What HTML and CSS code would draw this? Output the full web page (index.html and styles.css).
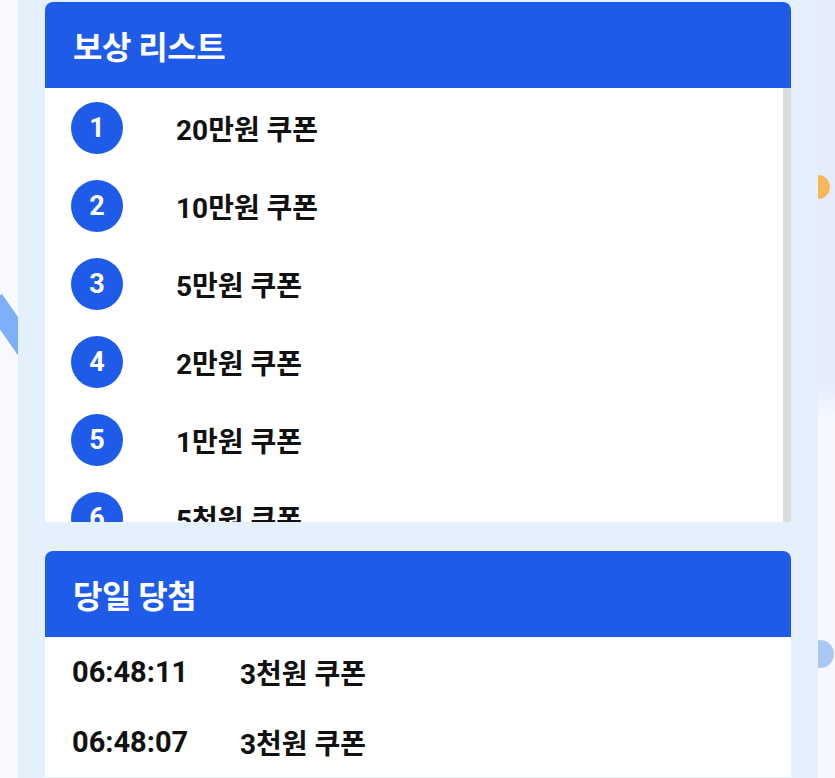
FILE: index.html
```html
<!DOCTYPE html>
<html lang="ko">
<head>
<meta charset="utf-8">
<link rel="stylesheet" href="styles.css">
</head>
<body>
<div class="page">
  <div class="side side-left">
    <div class="stripe"></div>
  </div>
  <main class="panel">
    <section class="card">
      <header class="card-head">보상 리스트</header>
      <div class="reward-list">
        <div class="reward"><span class="rank">1</span><span class="label">20만원 쿠폰</span></div>
        <div class="reward"><span class="rank">2</span><span class="label">10만원 쿠폰</span></div>
        <div class="reward"><span class="rank">3</span><span class="label">5만원 쿠폰</span></div>
        <div class="reward"><span class="rank">4</span><span class="label">2만원 쿠폰</span></div>
        <div class="reward"><span class="rank">5</span><span class="label">1만원 쿠폰</span></div>
        <div class="reward"><span class="rank">6</span><span class="label">5천원 쿠폰</span></div>
      </div>
    </section>
    <section class="card card-second">
      <header class="card-head">당일 당첨</header>
      <div class="win-list">
        <div class="win"><span class="time">06:48:11</span><span class="label">3천원 쿠폰</span></div>
        <div class="win"><span class="time">06:48:07</span><span class="label">3천원 쿠폰</span></div>
      </div>
    </section>
  </main>
  <div class="side side-right">
    <div class="dot dot-orange"></div>
    <div class="dot dot-blue"></div>
  </div>
</div>
</body>
</html>
```
FILE: styles.css
```css
* { box-sizing: border-box; }
html, body { margin: 0; padding: 0; }
body {
  background: #f5f7fd;
  font-family: Roboto, "Noto Sans CJK KR", "Noto Sans", sans-serif;
  width: 835px;
  height: 778px;
  overflow: hidden;
}
.page {
  display: flex;
  height: 778px;
}
.side {
  position: relative;
  width: 18px;
  flex: none;
  background: #f7f9fe;
}
.side-right {
  width: 17px;
  background: linear-gradient(180deg, #e6ecfb 0, #e6ecfb 380px, #f6f8fe 420px, #f6f8fe 100%);
}
.stripe {
  position: absolute;
  left: -22px;
  top: 318px;
  width: 70px;
  height: 22px;
  background: #7cb0fb;
  transform: rotate(55deg);
}
.dot {
  position: absolute;
  left: -12px;
  border-radius: 50%;
}
.dot-orange {
  top: 175px;
  width: 24px;
  height: 24px;
  background: #f8b75a;
}
.dot-blue {
  top: 640px;
  width: 28px;
  height: 28px;
  background: #a9c9f5;
}
.panel {
  width: 800px;
  flex: none;
  background: #e4f0fc;
  padding: 2px 27px 0;
  position: relative;
  z-index: 1;
}
.card {
  background: #ffffff;
  border-radius: 8px 8px 0 0;
  overflow: hidden;
}
.card-second { margin-top: 29px; }
.card-head {
  height: 86px;
  background: #1f5be9;
  color: #ffffff;
  font-weight: 700;
  font-size: 32px;
  display: flex;
  align-items: center;
  padding-left: 28px;
  letter-spacing: -0.5px;
}
.reward-list {
  height: 434px;
  overflow: hidden;
  border-right: 8px solid #dcdcdc;
  padding-top: 1px;
}
.reward {
  height: 78px;
  display: flex;
  align-items: center;
  padding-left: 26px;
}
.rank {
  width: 52px;
  height: 52px;
  border-radius: 50%;
  background: #1f5be9;
  color: #ffffff;
  font-weight: 700;
  font-size: 27px;
  display: flex;
  align-items: center;
  justify-content: center;
  flex: none;
}
.label {
  color: #111111;
  font-weight: 700;
  font-size: 28px;
}
.reward .label { margin-left: 53px; }
.win-list { padding-top: 0; }
.win {
  height: 70px;
  display: flex;
  align-items: center;
  padding-left: 27px;
}
.time {
  width: 168px;
  flex: none;
  color: #111111;
  font-weight: 700;
  font-size: 29px;
}
```
